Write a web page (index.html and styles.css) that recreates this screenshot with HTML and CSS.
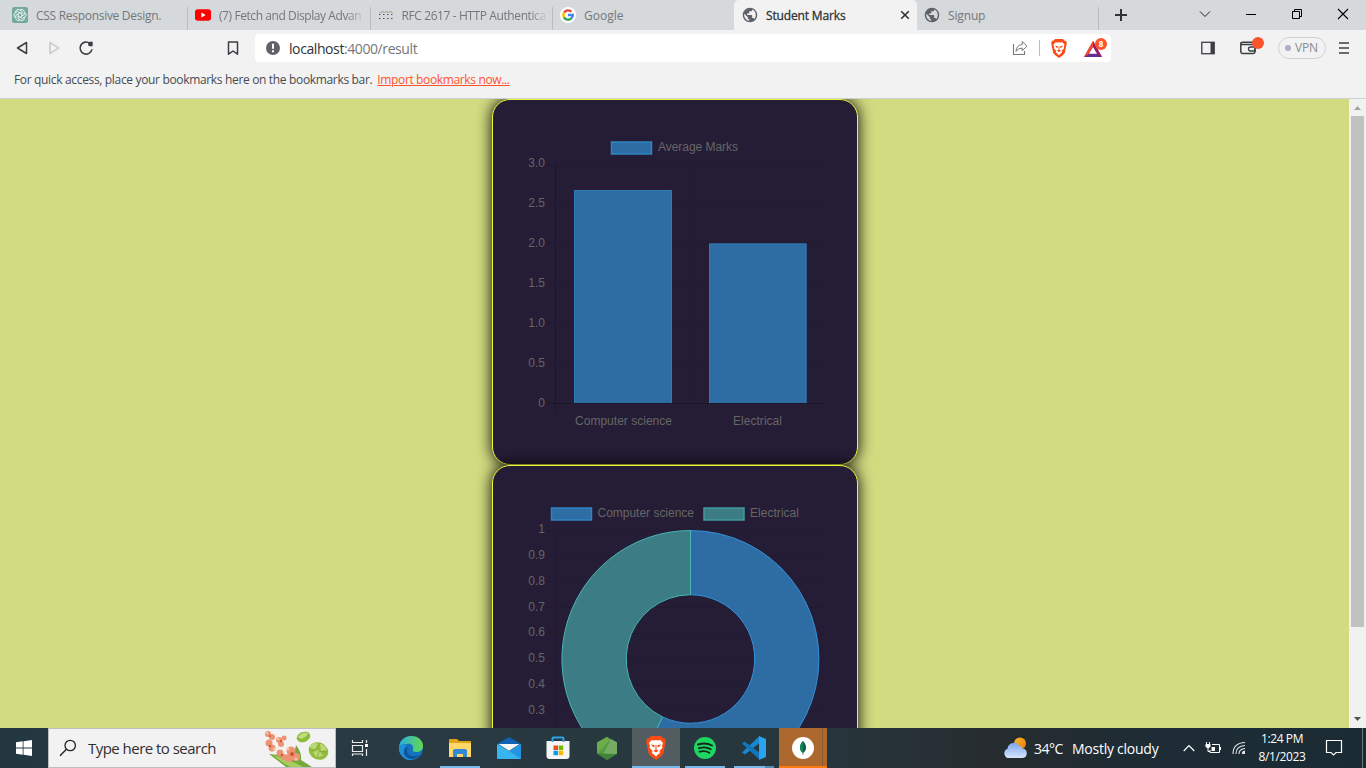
FILE: index.html
```
<!DOCTYPE html>
<html lang="en">
<head>
<meta charset="utf-8">
<title>Student Marks</title>
<link rel="stylesheet" href="styles.css">
</head>
<body>
<svg class="defs" aria-hidden="true">
  <symbol id="globe" viewBox="1 1 22 22"><path fill="#5f6368" d="M12 2C6.480 2 2 6.480 2 12s4.480 10 10 10 10-4.480 10-10S17.520 2 12 2zm-1 17.930c-3.950-.49-7-3.850-7-7.930 0-.62.08-1.210.21-1.790L9 15v1c0 1.100.9 2 2 2v1.930zm6.900-2.540c-.26-.81-1-1.390-1.900-1.390h-1v-3c0-.55-.45-1-1-1H8v-2h2c.55 0 1-.45 1-1V7h2c1.100 0 2-.9 2-2v-.41c2.930 1.190 5 4.060 5 7.410 0 2.080-.8 3.970-2.100 5.390z"/></symbol>
  <symbol id="lion" viewBox="0 0 20 24"><path d="M5 0h10l2 2.300 2-.1.900 3.800-.8 2.500-1.700 8.800-2.200 3L10 24l-5.200-3.700-2.200-3L.9 8.500.1 6 1 2.200l2 .1z" fill="#fb4b14"/><path d="m3 7 2.800-3 2.400.5L10 4l1.800.5 2.400-.5L17 7l-1 3 .4 1.800-3 3.200.6 2.200-1.600.8L10 20.500 7.400 18l-1.600-.8.800-2.200-3-3.200L4 10z" fill="#fff"/><path d="M5 8.300l3.600.9-.3 2.300-1.800-.9zm10 0-3.600.9.3 2.300 1.800-.9zM7.300 14.700l2.200-1V9h1v4.700l2.200 1L10 16.500z" fill="#fb4b14"/></symbol>
</svg>
<div class="screen">
  <header class="tabs">
    <div class="tab tab-first">
      <svg class="fav" viewBox="0 0 16 16"><rect width="16" height="16" rx="2" fill="#74aa9c"/><g fill="none" stroke="#fff" stroke-width=".8"><path id="petal" d="M8 3a2.500 2.500 0 0 1 4.200 1.800v3L8 10.200"/><use href="#petal" transform="rotate(60 8 8)"/><use href="#petal" transform="rotate(120 8 8)"/><use href="#petal" transform="rotate(180 8 8)"/><use href="#petal" transform="rotate(240 8 8)"/><use href="#petal" transform="rotate(300 8 8)"/></g></svg>
      <span class="t t1">CSS Responsive Design.</span>
    </div>
    <div class="tab">
      <svg class="fav" viewBox="0 0 16 16"><rect y="2.300" width="16" height="11.500" rx="2.800" fill="#f00"/><path d="M6.400 5.600v4.800L10.600 8z" fill="#fff"/></svg>
      <span class="t t2 fade">(7) Fetch and Display Advan</span>
    </div>
    <div class="tab">
      <svg class="fav" viewBox="0 0 16 16"><path d="M1 5.500h14M3 4.500h11" stroke="#b8afa2" stroke-dasharray="3 1"/><path d="M1 7.500h15M1 11.500h15" stroke="#555" stroke-width="1.200" stroke-dasharray="1.500 2.500"/></svg>
      <span class="t t3 fade">RFC 2617 - HTTP Authentica</span>
    </div>
    <div class="tab no-line">
      <svg class="fav" viewBox="0 0 16 16"><circle cx="8" cy="8" r="8" fill="#fff"/><g fill="none" stroke-width="2.400"><path d="M4.200 5.500A4.700 4.700 0 0 1 11.400 4.700" stroke="#ea4335"/><path d="M4.200 5.400a4.700 4.700 0 0 0 0 5.200" stroke="#fbbc05"/><path d="M4 10.500a4.700 4.700 0 0 0 7.300.8" stroke="#34a853"/><path d="M8 8h4.800a4.700 4.700 0 0 1-1.600 3.500" stroke="#4285f4"/></g></svg>
      <span class="t t4">Google</span>
    </div>
    <div class="tab active">
      <svg class="fav"><use href="#globe"/></svg>
      <span class="t t5">Student Marks</span>
      <svg class="tab-x" viewBox="0 0 10 10"><path d="m1.200 1.200 7.600 7.600m0-7.600L1.200 8.800" stroke="#303336" stroke-width="1.600"/></svg>
    </div>
    <div class="tab last">
      <svg class="fav"><use href="#globe"/></svg>
      <span class="t t6">Signup</span>
    </div>
    <svg class="plus" viewBox="0 0 12 12"><path d="M6 0v12M0 6h12" stroke="#303336" stroke-width="2"/></svg>
    <div class="win">
      <svg viewBox="0 0 12 12"><path d="m1 3.500 5 5 5-5" fill="none" stroke="#222"/></svg>
      <svg viewBox="0 0 12 12"><path d="M1 6.500h10" stroke="#000"/></svg>
      <svg viewBox="0 0 12 12"><path d="M1.500 3.500h7v7h-7zM3.500 3.500v-2h7v7h-2" fill="none" stroke="#000"/></svg>
      <svg viewBox="0 0 12 12"><path d="m1 1 10 10M11 1 1 11" stroke="#000" stroke-width="1.100"/></svg>
    </div>
  </header>

  <div class="toolbar">
    <svg class="i-back" viewBox="0 0 16 16"><path d="M12.500 2.500v11L3.500 8z" fill="none" stroke="#3b3e42" stroke-width="1.500" stroke-linejoin="round"/></svg>
    <svg class="i-fwd" viewBox="0 0 16 16"><path d="M4 2.500v11L12.800 8z" fill="none" stroke="#c2c4c6" stroke-width="1.400" stroke-linejoin="round"/></svg>
    <svg class="i-reload" viewBox="0 0 16 16"><path d="M12 3.500A6 6 0 1 0 14 9.300" fill="none" stroke="#3b3e42" stroke-width="1.600"/><path d="M10.200 2.500q3.500-1.500 4.500-.5v4q-2 .7-4.500-.6z" fill="#3b3e42"/></svg>
    <svg class="i-mark" viewBox="0 0 12 16"><path d="M1.500 2h9v12.200L6 11l-4.500 3.200z" fill="none" stroke="#3b3e42" stroke-width="1.500" stroke-linejoin="round"/></svg>
    <div class="url">
      <svg class="i-info" viewBox="0 0 14 14"><circle cx="7" cy="7" r="7" fill="#5f6368"/><path d="M7 2.800v5M7 9.300v2" stroke="#fff" stroke-width="2"/></svg>
      <span class="addr"><b>localhost</b>:4000/result</span>
      <svg class="i-share" viewBox="0 0 16 16"><path d="M1.500 4v10.500h11V11" fill="none" stroke="#777" stroke-width="1.100"/><path d="M10.200 1.500 15 6.200l-4.800 4.500V8Q6 8 4 11.500 4.500 5 10.200 4.500z" fill="none" stroke="#777" stroke-linejoin="round"/></svg>
      <span class="bar"></span>
      <svg class="i-lion"><use href="#lion"/></svg>
      <div class="bat">
        <svg viewBox="0 0 18 16"><path d="M9 0 0 16h18z" fill="#662d91"/><path d="M9 0 0 16l4.300-2.800L9 5.500z" fill="#ff4724"/><path d="m9 0 9 16-4.300-2.800L9 5.500z" fill="#9e1f63"/><path d="m9 6-4 6.700h8z" fill="#fff"/></svg>
        <span class="badge">8</span>
      </div>
    </div>
    <svg class="i-side" viewBox="0 0 14 14"><rect x=".8" y="1.300" width="12.400" height="11.400" fill="none" stroke="#3b3e42" stroke-width="1.300"/><path d="M9.500 1.300h3.700v11.400H9.500z" fill="#3b3e42"/></svg>
    <div class="wallet">
      <svg viewBox="0 0 16 14"><path d="M13 2.500V1.300H2.500Q.8 1.300.8 2.800v8q0 1.700 1.700 1.700h10.800q1.700 0 1.700-1.700V5q0-1.500-1.700-1.500H1.500" fill="none" stroke="#3b3e42" stroke-width="1.500"/><path d="M15 6h-4.500a2 2 0 0 0 0 4H15z" fill="none" stroke="#3b3e42" stroke-width="1.300"/></svg>
      <span class="dot"></span>
    </div>
    <div class="vpn"><i></i>VPN</div>
    <svg class="i-menu" viewBox="0 0 10 12"><path d="M0 1h10M0 6h10M0 11h10" stroke="#3b3e42" stroke-width="1.600"/></svg>
  </div>

  <div class="bookmarks"><span class="bm1">For quick access, place your bookmarks here on the bookmarks bar.</span><a class="bm2">Import bookmarks now...</a></div>

  <div class="viewport">
    <main class="page">
      <section class="card">
        <svg class="chart" viewBox="493 100 364 364">
          <rect x="611.500" y="142" width="40" height="12" fill="#2e6da4" stroke="#3083c3" stroke-width="1.500"/>
          <text x="658" y="151" textLength="80">Average Marks</text>
          <path class="grid" d="M547 164.500h278M547 203.500h278M547 243.500h278M547 283.500h278M547 323.500h278M547 363.500h278M690.500 164v248"/>
          <path class="axis" d="M555.500 164v248M547 403.500h278"/>
          <path d="M574 190h98v213h-98zM709 243.500h97.500V403H709z" fill="#2e6da4"/>
          <path d="M574.500 403V190.500h97V403M709.500 403V244h96.500v159" fill="none" stroke="#3079b5"/>
          <g text-anchor="end"><text x="545" y="167">3.0</text><text x="545" y="207">2.5</text><text x="545" y="247">2.0</text><text x="545" y="287">1.5</text><text x="545" y="327">1.0</text><text x="545" y="367">0.5</text><text x="545" y="407">0</text></g>
          <text x="575" y="425" textLength="97">Computer science</text>
          <text x="733" y="425" textLength="49">Electrical</text>
        </svg>
      </section>
      <section class="card">
        <svg class="chart" viewBox="493 466 364 364">
          <rect x="551.500" y="508" width="40" height="12" fill="#2e6da4" stroke="#3083c3" stroke-width="1.500"/>
          <text x="597.500" y="517" textLength="96.500">Computer science</text>
          <rect x="704" y="508" width="40" height="12" fill="#3c7c85" stroke="#409b9f" stroke-width="1.500"/>
          <text x="750" y="517" textLength="49">Electrical</text>
          <path class="grid" d="M547 530.500h278M547 555.500h278M547 581.500h278M547 607.500h278M547 633.500h278M547 658.500h278M547 684.500h278M547 710.500h278M555.500 530v240"/>
          <path d="M690.500 530.500A128.500 128.500 0 1 1 634.700 774.800L662.600 716.900A64.250 64.250 0 1 0 690.500 594.750z" fill="#2e6da4" stroke="#3392dc"/>
          <path d="M634.700 774.800A128.500 128.500 0 0 1 690.500 530.500V594.750A64.250 64.250 0 0 0 662.600 716.900z" fill="#3c7c85" stroke="#48b5b5"/>
          <g text-anchor="end"><text x="545" y="533">1</text><text x="545" y="559">0.9</text><text x="545" y="585">0.8</text><text x="545" y="611">0.7</text><text x="545" y="636">0.6</text><text x="545" y="662">0.5</text><text x="545" y="688">0.4</text><text x="545" y="714">0.3</text></g>
        </svg>
      </section>
    </main>
    <div class="scroll">
      <svg viewBox="0 0 17 17"><path d="M5 11h7L8.500 7z" fill="#a3a3a3"/></svg>
      <div class="thumb"></div>
      <svg class="down" viewBox="0 0 17 17"><path d="M5 6h7L8.500 10z" fill="#505050"/></svg>
    </div>
  </div>

  <footer class="taskbar">
    <div class="start"><svg viewBox="0 0 16 16"><path d="M0 2.300 6.700 1.300v6.300H0zM7.500 1.200 16 0v7.600H7.500zM0 8.400h6.700v6.300L0 13.700zM7.500 8.400H16V16l-8.500-1.200z" fill="#fff"/></svg></div>
    <div class="search">
      <svg class="mag" viewBox="0 0 18 18"><circle cx="11.200" cy="6.500" r="5.200" fill="none" stroke="#222" stroke-width="1.300"/><path d="m7.400 10.300-6.400 6.400" stroke="#222" stroke-width="1.400"/></svg>
      <span>Type here to search</span>
      <svg class="flowers" viewBox="0 0 66 38">
        <path d="M5 25q15 1 24 6l3-15q6 8 5 15l11 7H22Q13 31 5 25z" fill="#74a83b"/><path d="M9 26q16 4 30 12H26Q17 33 9 26z" fill="#a5cf5c"/>
        <g fill="#ef9274"><circle cx="4" cy="5" r="3"/><circle cx="8" cy="8" r="3"/><circle cx="5" cy="14" r="3.500"/><circle cx="15" cy="11" r="3"/><circle cx="20" cy="9" r="2.500"/><circle cx="17" cy="15" r="3"/><circle cx="8" cy="19" r="3.500"/><circle cx="16" cy="24" r="3.500"/><circle cx="20" cy="28" r="3"/><circle cx="27" cy="22" r="4.500"/><circle cx="32" cy="28" r="4"/><circle cx="25" cy="29" r="4"/></g>
        <g fill="#c9553f"><circle cx="6" cy="7" r="1"/><circle cx="17" cy="12" r="1.200"/><circle cx="6" cy="17" r="1.200"/><circle cx="18" cy="26" r="1.200"/><circle cx="28" cy="25" r="2"/></g>
        <g fill="#fbc3a5"><circle cx="3" cy="4" r="1.300"/><circle cx="14" cy="10" r="1.300"/><circle cx="10" cy="20" r="1.300"/><circle cx="24" cy="20" r="1.500"/><circle cx="32" cy="30" r="1.500"/></g>
        <ellipse cx="39.500" cy="8" rx="7" ry="5" transform="rotate(-22 39.500 8)" fill="#8dbb3c"/><path d="M34 8q4-5 10-4-1 4-7 6z" fill="#c0dc7d"/>
        <ellipse cx="54.500" cy="22" rx="10" ry="8.500" transform="rotate(25 54.500 22)" fill="#94bd3e"/><path d="M45 18q4-6 9-3l-3 6zM56 15q5 0 7 6l-6 1zM49 23l6-2 4 6-7 1z" fill="#bad775"/><path d="m47 22 5-2 3-5m-2 14 2-7 7 1" fill="none" stroke="#7da53a" stroke-width=".7"/>
      </svg>
    </div>
    <div class="apps">
      <div class="app taskview"><svg width="18" height="18" viewBox="0 0 18 18"><path d="M1.500 1v2.500h10V1M1.500 6.500h10v6h-10zM1.500 17v-2h10v2M15.500 1v3M15.500 10v7" fill="none" stroke="#e8eaeb" stroke-width="1.200"/><path d="M14 5h3v3h-3z" fill="#fff"/></svg></div>
      <div class="app"><svg width="24" height="24" viewBox="0 0 24 24"><defs><linearGradient id="eg"><stop stop-color="#2caee0"/><stop offset="1" stop-color="#62d84e"/></linearGradient></defs><circle cx="12" cy="12" r="12" fill="#1572bd"/><path d="M0 11C1 4 6 0 12 0c8 0 12 5 12 10 0 4-3 6-7 6-3 0-4-1-3-3 1-3-2-6-6-5-4 0-7 1-8 3z" fill="url(#eg)"/><path d="M8 9c-6 5-2 14 6 14.500Q9 25 5 22-1 17 0 11 3 7 8 9z" fill="#1c91d7"/><path d="M9 11c-3 5 1 10 7 9 3 0 5-1 6-2-4 6-14 7-17 0-1-4 1-6 4-7z" fill="#0c559c"/></svg></div>
      <div class="app"><svg width="22" height="20" viewBox="0 0 22 20"><path d="M0 2q0-1 1-1h7l2 2h12v16H0z" fill="#e0a315"/><path d="M0 5h22v14H0z" fill="#ffd869"/><path d="M4 19v-6q0-2 2-2h10q2 0 2 2v6h-4v-3H8v3z" fill="#3289d6"/></svg><i class="line"></i></div>
      <div class="app"><svg width="24" height="22" viewBox="0 0 24 22"><path d="M0 7 12 0l12 7-3 4H3z" fill="#1062b6"/><path d="M0 7v15h24V7L12 14z" fill="#38b5ef"/><path d="m12 14 12-7v15z" fill="#2493e0"/><path d="M1.500 7h21L12 13.700z" fill="#f5f5f5"/></svg></div>
      <div class="app"><svg width="24" height="24" viewBox="0 0 24 24"><path d="M.5 5h23v15q0 3-3 3h-17q-3 0-3-3z" fill="#f5f5f5"/><path d="M6.500 6V2.500q0-1 1-1h9q1 0 1 1V6" fill="none" stroke="#2aa5e5" stroke-width="2"/><path d="M7.500 9.500H12V14H7.500z" fill="#f04d22"/><path d="M12.700 9.500h4.500V14h-4.500z" fill="#73b700"/><path d="M7.500 14.700H12v4.500H7.500z" fill="#00a0ec"/><path d="M12.700 14.700h4.500v4.500h-4.500z" fill="#f9b700"/></svg></div>
      <div class="app"><svg width="20" height="23" viewBox="0 0 20 23"><path d="m10 0 10 5.500v11L10 23 0 16.500v-11z" fill="#549d43"/><path d="M10 0 0 5.500v11L13 3z" fill="#6dab4b"/><path d="m14 2 6 3.500v11l-15 3z" fill="#76ac64"/><path d="M0 16.500 20 17l-10 6z" fill="#3f8238"/></svg></div>
      <div class="app current"><svg width="20" height="24"><use href="#lion"/></svg><i class="line full"></i></div>
      <div class="app"><svg width="22" height="22" viewBox="0 0 22 22"><circle cx="11" cy="11" r="11" fill="#1ed760"/><path d="M4 7.500q8-2.300 14 1M5 11.200q6.500-2 11.700 1M5.500 14.700q5.500-1.500 9.800 1" fill="none" stroke="#15251d" stroke-width="1.900" stroke-linecap="round"/></svg><i class="line"></i></div>
      <div class="app"><svg width="24" height="24" viewBox="0 0 24 24"><path d="M17.500 0v7L3 18.500l-3-2z" fill="#1688d1"/><path d="M0 7.500 2.500 5.500 18 17v7z" fill="#1177bd"/><path d="M17 0l7 3v18l-7 3z" fill="#29a3ef"/></svg><i class="line split"></i></div>
      <div class="app mongo"><svg width="22" height="22" viewBox="0 0 22 22"><circle cx="11" cy="11" r="11" fill="#fff"/><path d="M11 4q-3.500 3.500-3 7.500.5 3 2.700 4.500v2h.6v-2q2.200-1.500 2.700-4.500Q14.500 7.500 11 4z" fill="#116149"/><path d="M11 4q-3.500 3.500-3 7.500.5 3 3 4.500z" fill="#13865b"/></svg><i class="line full orange"></i></div>
    </div>
    <div class="tray">
      <svg class="weather" viewBox="0 0 26 22"><defs><linearGradient id="sun" x2="1" y2="1"><stop stop-color="#f5bd27"/><stop offset="1" stop-color="#ee7411"/></linearGradient><linearGradient id="cl" x2="0" y2="1"><stop stop-color="#7ba5ed"/><stop offset="1" stop-color="#d9e5fb"/></linearGradient></defs><circle cx="18" cy="6.500" r="6" fill="url(#sun)"/><path d="M5.500 21a5 5 0 0 1 0-9.300A6.500 6.500 0 0 1 17.500 9a4.300 4.300 0 0 1 3.200 2.500 4.800 4.800 0 0 1 0 9.500z" fill="url(#cl)"/></svg>
      <span class="temp">34°C</span><span class="cond">Mostly cloudy</span>
      <svg class="up" viewBox="0 0 12 8"><path d="m.7 7 5.300-5.500L11.300 7" fill="none" stroke="#fff" stroke-width="1.200"/></svg>
      <svg class="batt" viewBox="0 0 16 13"><path d="M7 2.500h7.500v8H5V8M15.500 5v3" fill="none" stroke="#fff"/><path d="M6.500 5h3.500v4H6.500z" fill="#fff"/><path d="M1.500 0v2M4.500 0v2M3 6v3.500h2" fill="none" stroke="#fff"/><path d="M.5 2h5v2.500L4 6H2L.5 4.500z" fill="#fff"/></svg>
      <svg class="wifi" viewBox="0 0 14 14"><g fill="none" stroke="#dfe4e6" stroke-width="1.100"><path d="M1 13Q1 2 13 1.500M4 13Q4 5 13 4.500M7 13q0-5 6-5.500"/></g><path d="M10 13v-2q1-1.500 3-1.500V13z" fill="#dfe4e6"/></svg>
      <div class="clock"><span>1:24 PM</span><span class="date">8/1/2023</span></div>
      <svg class="note" viewBox="0 0 18 18"><path d="M1.500 1.500h15v12H11l-2.500 2.500L6 13.500H1.500z" fill="none" stroke="#fff" stroke-width="1.200"/></svg>
      <i class="peek"></i>
    </div>
  </footer>
</div>
</body>
</html>
```
FILE: styles.css
```
* { box-sizing: border-box; }
body { margin: 0; font-family: "Open Sans", "Noto Sans", sans-serif; font-size: 12px; overflow: hidden; }
svg { display: block; flex: none; }
.defs { position: absolute; width: 0; height: 0; }
.screen { width: 1366px; height: 768px; display: flex; flex-direction: column; overflow: hidden; }

.tabs { height: 30px; background: #d5d9dc; display: flex; align-items: stretch; flex: none; }
.tab { width: 182.500px; display: flex; align-items: center; gap: 8px; padding-left: 7px; color: #73777b; background: linear-gradient(#b8bcbe, #b8bcbe) right 7px / 1px 23px no-repeat; white-space: nowrap; flex: none; }
.tab-first { width: 188px; padding-left: 12px; }
.tab.no-line { background: none; width: 181px; }
.tab.last { width: 182px; margin-right: -.5px; }
.tab.active { width: 183px; padding-left: 8px; background: #f2f2f2; color: #303336; border-radius: 5px 5px 0 0; }
.fav { width: 16px; height: 16px; }
.t { line-height: 18px; padding-top: 1px; }
.t1 { letter-spacing: -.29px; }
.t2, .t3 { width: 147px; }
.t2 { letter-spacing: -.42px; }
.t3 { letter-spacing: -.4px; }
.fade { -webkit-mask-image: linear-gradient(90deg, #000 128px, transparent); mask-image: linear-gradient(90deg, #000 128px, transparent); }
.t5 { letter-spacing: -.15px; -webkit-text-stroke: .3px #303336; }
.t6 { letter-spacing: -.15px; }
.tab-x { width: 10px; height: 10px; margin-left: auto; margin-right: 7px; }
.plus { width: 12px; height: 12px; margin: 9px 0 0 16px; }
.win { display: flex; gap: 34px; margin: 8px 17px 0 auto; }
.win svg { width: 12px; height: 12px; }

.toolbar { height: 36px; background: #f2f2f2; display: flex; align-items: center; flex: none; }
.i-back, .i-fwd, .i-reload { width: 16px; height: 16px; }
.i-back { margin-left: 14px; }
.i-fwd { margin-left: 16px; }
.i-reload { margin-left: 16px; }
.i-mark { width: 12px; height: 16px; margin-left: 133px; }
.url { width: 856px; height: 28px; margin-left: 16px; background: #fff; border-radius: 4px; display: flex; align-items: center; padding: 0 4px 0 11px; }
.i-info { width: 14px; height: 14px; }
.addr { margin-left: 9px; font-size: 14px; letter-spacing: -.41px; color: #74787c; line-height: 20px; padding-top: 1px; }
.addr b { font-weight: 400; color: #303336; }
.i-share { width: 16px; height: 16px; margin-left: auto; }
.bar { width: 1px; height: 16px; background: #bbb; margin: 0 11px; }
.i-lion { width: 16px; height: 19px; }
.bat { position: relative; margin-left: 17px; width: 23px; height: 18px; padding-top: 2px; }
.bat svg { width: 18px; height: 16px; }
.badge { position: absolute; left: 11px; top: -1px; width: 12px; height: 12px; border-radius: 50%; background: #fb542b; color: #fff; font: bold 8px/12px "Open Sans", sans-serif; text-align: center; }
.i-side { width: 14px; height: 14px; margin-left: 90px; }
.wallet { position: relative; margin-left: 25px; width: 24px; height: 14px; }
.wallet svg { width: 16px; height: 14px; }
.dot { position: absolute; left: 12px; top: -4px; width: 12px; height: 12px; border-radius: 50%; background: #fb542b; }
.vpn { width: 48px; height: 22px; margin-left: 14px; border: 1px solid #cfd0d2; border-radius: 11px; display: flex; align-items: center; padding-left: 6px; color: #868b95; line-height: 20px; letter-spacing: -.2px; }
.vpn i { width: 6px; height: 6px; border-radius: 50%; background: #a9b0c3; margin-right: 4px; }
.i-menu { width: 10px; height: 12px; margin-left: 13px; }

.bookmarks { height: 33px; flex: none; background: #f2f2f2; border-bottom: 1px solid #cfd2d5; padding: 5px 0 0 14px; line-height: 18px; color: #474b50; white-space: nowrap; }
.bm1 { letter-spacing: -.335px; }
.bm2 { color: #fb542b; text-decoration: underline; margin-left: 5px; letter-spacing: -.36px; }

.viewport { height: 629px; flex: none; display: flex; overflow: hidden; }
.page { width: 1349px; height: 629px; overflow: hidden; background: #d2db80; display: flex; flex-direction: column; align-items: center; }
.card { width: 366px; height: 366px; flex: none; border: 1px solid #eef63a; border-radius: 18px; background: #251d35; box-shadow: 0 0 15px #000; margin-left: 1px; }
.chart { width: 364px; height: 364px; }
.chart text { font: 12px "Liberation Sans", Arial, sans-serif; fill: #666; }
.grid { stroke: #211a30; fill: none; }
.axis { stroke: #1c1628; fill: none; }
.scroll { width: 17px; background: #f1f1f1; display: flex; flex-direction: column; }
.scroll svg { width: 17px; height: 17px; }
.thumb { width: 13px; height: 511px; margin: 0 2px; background: #c1c1c1; }
.down { margin-top: auto; }

.taskbar { height: 40px; flex: none; display: flex; background: linear-gradient(90deg, #233740, #293a42 30%, #27363d 60%, #262c2f 73%, #1d2c35 85%, #1b2b34); color: #fff; }
.start { width: 48px; display: flex; align-items: center; justify-content: center; }
.start svg { width: 16px; height: 16px; }
.search { width: 288px; background: #f2f2f2; border: 1px solid #bcbfc1; display: flex; align-items: center; padding-left: 10px; color: #303030; font-size: 15px; letter-spacing: -.53px; white-space: nowrap; }
.mag { width: 18px; height: 18px; margin-right: 11px; }
.flowers { width: 66px; height: 38px; margin: 0 5px 0 auto; }
.apps { display: flex; gap: 1px; }
.app { width: 48px; height: 40px; display: flex; align-items: center; justify-content: center; position: relative; }
.taskview { margin-right: 2px; }
.current { background: #535d61; }
.mongo { background: linear-gradient(90deg, #ad682f 43px, #8c592e 43px, #8c592e 44px, #ad682f 44px); }
.line { position: absolute; bottom: 0; left: 4px; width: 40px; height: 2px; background: #76b9ed; }
.line.full { left: 0; width: 48px; }
.line.orange { background: #ff7a0a; }
.line.split { background: linear-gradient(90deg, #76b9ed 31px, #578bb2 31px); }
.tray { margin-left: auto; display: flex; align-items: center; }
.weather { width: 26px; height: 22px; }
.temp, .cond { font-size: 14px; white-space: nowrap; }
.temp { width: 32px; margin-left: 6px; letter-spacing: -.5px; }
.cond { width: 90px; margin-left: 6px; letter-spacing: -.25px; }
.up { width: 12px; height: 8px; margin-left: 21px; }
.batt { width: 16px; height: 13px; margin-left: 10px; }
.wifi { width: 14px; height: 14px; margin-left: 11px; }
.clock { width: 60px; margin-left: 6px; display: flex; flex-direction: column; align-items: center; line-height: 18px; letter-spacing: -.4px; }
.note { width: 18px; height: 18px; margin-left: 13px; }
.peek { width: 1px; height: 40px; background: #6a767c; margin: 0 3px 0 19px; }
```
